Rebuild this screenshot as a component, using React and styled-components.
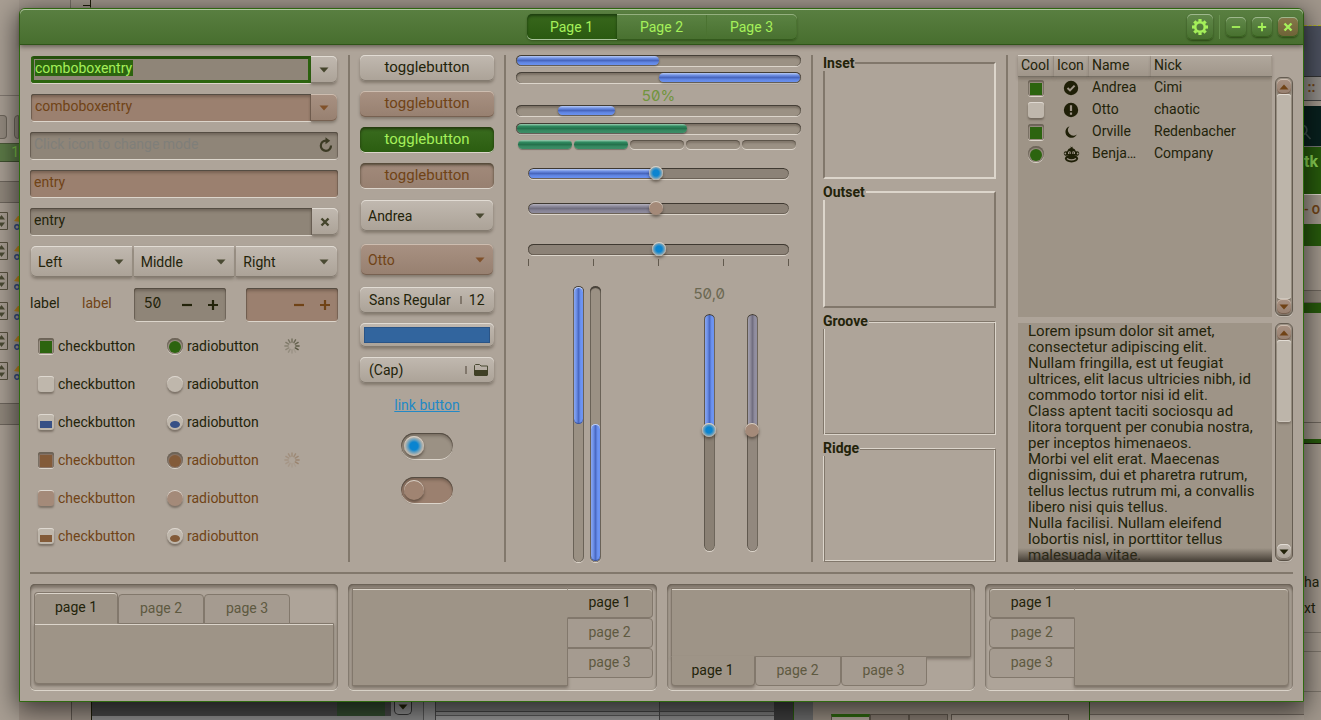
import React from "react";
import styled, { createGlobalStyle, css } from "styled-components";

const c = {
  bg: "#aea499",
  base: "#9e9487",
  field: "#8f8578",
  off: "#9b806f",
  text: "#23230a",
  textOff: "#704316",
  line: "#82786c",
  light: "#dcd5cb",
  green: "#2c640f",
  lime: "#a5f05a",
};

const Global = createGlobalStyle`
  *, *::before, *::after { box-sizing: border-box; }
  body { margin: 0; background: #9f958a; color: ${c.text}; font: 14px/16px Roboto, "Liberation Sans", sans-serif; }
  button, input, select, textarea { font: inherit; color: inherit; margin: 0; padding: 0; border: 0; background: none; border-radius: 0; outline: 0; }
`;

const raised = css`
  background: ${(p) => (p.$off ? "linear-gradient(#a89182, #978070)" : "linear-gradient(#c1b9b0, #aba297)")};
  color: ${(p) => (p.$off ? c.textOff : c.text)};
  box-shadow: inset 0 1px ${(p) => (p.$off ? "#cdbdb0" : "#e2dcd4")}, inset 0 -1px ${(p) => (p.$off ? "#776151" : "#837a6f")}, 0 2px 3px rgba(50, 40, 30, 0.35);
`;
const sunken = css`
  background: ${(p) => (p.$off ? c.off : c.field)};
  color: ${(p) => (p.$off ? c.textOff : c.text)};
  box-shadow: inset 0 -1px ${c.light}, inset 0 1px #554d43, inset 1px 0 rgba(70, 60, 50, 0.4), inset -1px 0 rgba(70, 60, 50, 0.3), inset 0 3px 3px rgba(40, 30, 20, 0.3);
`;

/* ---------- desktop ---------- */
const Desktop = styled.div`
  display: grid;
  grid-template-columns: 19px minmax(0, 1fr) 17px;
  grid-template-rows: 8px auto minmax(18px, 1fr);
  min-height: 100vh;
  overflow: hidden;
`;
const TopStrip = styled.div`
  grid-area: 1 / 2 / 2 / 3;
  display: flex;
  background: #a1978c;
  span:first-child { width: 52px; border-right: 1px solid #777067; }
  span:last-child { width: 20px; border-right: 1px solid #1c1c08; border-bottom: 1px solid #a1978c; background: linear-gradient(#1c1c08, #1c1c08) no-repeat 12px 5px / 8px 1px; }
`;
const LeftStrip = styled.div`
  grid-area: 1 / 1 / 4 / 2;
  overflow: hidden;
  background: #a89e93;
`;
const LeftBand = styled.div`
  height: ${(p) => p.$h}px;
  background: ${(p) => p.$bg || "transparent"};
  border-bottom: 1px solid ${(p) => p.$line || "transparent"};
  color: #7cc247;
  text-align: right;
  padding-top: ${(p) => p.$pad || 0}px;
`;
const OldSpin = styled.div`
  display: flex;
  gap: 7px;
  padding-top: 19px;
  span { height: 24px; border: 1px solid #6d655b; border-left: 0; border-radius: 0 4px 4px 0; width: 10px; background: #938a7f; }
  span + span { border-left: 1px solid #6d655b; border-radius: 4px 0 0 4px; width: 6px; }
`;
const SpinLine = styled.div`
  display: flex;
  align-items: flex-start;
  gap: 6px;
  height: 30px;
  svg { flex: none; }
`;
const RightStrip = styled.div`
  grid-area: 1 / 3 / 4 / 4;
  overflow: hidden;
  background: #a1978c;
`;
const RightBand = styled.div`
  height: ${(p) => p.$h}px;
  background: ${(p) => p.$bg || "transparent"};
  border-bottom: 1px ${(p) => p.$style || "solid"} ${(p) => p.$line || "transparent"};
  color: ${(p) => p.$color || c.text};
  font-weight: ${(p) => (p.$bold ? 700 : 400)};
  font-size: ${(p) => p.$size || 14}px;
  line-height: ${(p) => p.$lh || 16}px;
  padding-top: ${(p) => p.$pad || 0}px;
  white-space: nowrap;
`;
const BottomStrip = styled.div`
  grid-area: 3 / 2 / 4 / 3;
  display: flex;
  background: #999086;
  overflow: hidden;
`;
const BottomPart = styled.div`
  flex: ${(p) => p.$w} 1 0;
  background: ${(p) => p.$bg};
  border-right: 1px solid ${(p) => p.$line || "transparent"};
  display: flex;
  justify-content: flex-end;
  align-items: flex-start;
`;
const GreenBlock = styled.span`width: 48px; height: 14px; background: #314a2e; margin-right: 5px;`;
const TinyDown = styled.span`
  width: 18px; height: 13px; margin-right: 11px; border: 1px solid #333; border-top: 0; border-radius: 0 0 5px 5px; background: #8c8c8c;
  display: flex; flex: none; justify-content: center; padding-top: 2px;
`;
const BackTabs = styled.div`
  display: flex;
  width: 100%;
  margin-top: 12px;
  padding-left: 18px;
  span { width: 39px; height: 6px; border: 1px solid #5c5349; border-bottom: 0; background: #81766c; }
  span:first-child { border-top: 3px solid ${c.green}; background: #aaa095; }
  span:nth-child(4) { width: 118px; margin-left: 3px; background: #9b9085; }
`;

/* ---------- window ---------- */
const Window = styled.div`
  grid-area: 2 / 2 / 3 / 3;
  position: relative;
  border: 1px solid #2f6a10;
  border-radius: 6px 6px 0 0;
  background: ${c.bg};
  box-shadow: 0 6px 26px 2px rgba(0, 0, 0, 0.62);
`;
const TitleBar = styled.header`
  display: grid;
  grid-template-columns: 1fr auto 1fr;
  align-items: center;
  height: 36px;
  padding: 0 5px 1px;
  border-radius: 5px 5px 0 0;
  background: linear-gradient(#597f41, #476e2e);
  box-shadow: inset 0 1px #b2c9a2, inset 0 -1px #2e5418, 0 2px 4px rgba(40, 35, 25, 0.5);
`;
const Switcher = styled.nav`
  grid-column: 2;
  display: flex;
  height: 26px;
  border-radius: 5px;
  box-shadow: 0 1px 2px rgba(20, 40, 0, 0.4);
`;
const PageButton = styled.button`
  width: 90px;
  color: ${c.lime};
  background: ${(p) => (p.$on ? "linear-gradient(#38671c, #2a5a10)" : "linear-gradient(#5b8343, #48702f)")};
  box-shadow: ${(p) => (p.$on ? "inset 0 -1px #aac59b, inset 0 2px 3px rgba(0,20,0,.5)" : "inset 0 1px #94b07f, inset 0 -1px #345a1d, inset -1px 0 #4b7331")};
  &:first-child { border-radius: 5px 0 0 5px; }
  &:last-child { border-radius: 0 5px 5px 0; }
`;
const Controls = styled.div`
  display: flex;
  align-items: center;
  justify-content: flex-end;
  gap: 6px;
`;
const TitleButton = styled.button`
  display: grid;
  place-items: center;
  width: ${(p) => (p.$big ? 26 : 20)}px;
  height: ${(p) => (p.$big ? 26 : 20)}px;
  border-radius: 5px;
  color: ${c.lime};
  background: ${(p) => (p.$close ? "linear-gradient(#86784a, #6d6236)" : "linear-gradient(#62894b, #47702e)")};
  box-shadow: inset 0 1px #9fb88e, inset 0 -1px #38601f, 0 1px 2px rgba(20, 40, 0, 0.6);
`;
const TitleRule = styled.span`width: 1px; height: 24px; background: #66904d;`;

const Content = styled.main`padding: 10px;`;
const Columns = styled.div`
  display: grid;
  grid-template-columns: 308fr 2px 134fr 2px 285fr 2px 173fr 2px 275fr;
  gap: 10px;
  height: 507px;
`;
const VRule = styled.div`background: ${c.line};`;
const HRule = styled.hr`height: 2px; border: 0; margin: 10px 0; background: ${c.line};`;

/* ---------- first column ---------- */
const Entries = styled.div`
  display: flex;
  flex-direction: column;
  gap: 10px;
  padding-top: 1px;
  min-width: 0;
`;
const Linked = styled.div`
  display: flex;
  height: 28px;
  padding: 0 ${(p) => (p.$inset ? 1 : 0)}px;
`;
const Entry = styled.input`
  flex: 1;
  min-width: 0;
  height: 28px;
  padding: 0 4px 4px;
  border-radius: ${(p) => (p.$joined ? "3px 0 0 3px" : "3px")};
  ${sunken}
`;
const FocusEntry = styled.div`
  flex: 1;
  min-width: 0;
  padding: 1px 1px 0;
  height: 27px;
  border: 3px solid ${c.green};
  border-top-color: #24500c;
  border-radius: 3px 0 0 3px;
  background: ${c.field};
  box-shadow: 0 1px ${c.light};
  input { width: 98px; height: 16px; display: block; background: ${c.green}; color: ${c.lime}; }
`;
const IconEntry = styled.div`
  display: flex;
  align-items: center;
  height: 28px;
  padding-right: 5px;
  border-radius: 3px;
  ${sunken}
  input { flex: 1; min-width: 0; padding: 0 4px 4px; height: 28px; }
  input::placeholder { color: #7f7f7a; opacity: 1; }
  button { height: 18px; }
`;
const EndButton = styled.button`
  display: grid;
  place-items: center;
  width: 26px;
  height: 27px;
  border-radius: 0 5px 5px 0;
  ${raised}
  svg { color: ${(p) => (p.$off ? "#80512a" : "#45452c")}; }
`;
const SelectRow = styled.div`display: flex; gap: 2px; padding: 0 1px; height: 32px;`;
const SelectBox = styled.div`
  position: relative;
  flex: 1;
  min-width: 0;
  height: 31px;
  svg { position: absolute; right: 8px; top: 13px; pointer-events: none; color: ${(p) => (p.$off ? "#80512a" : "#4a4a33")}; }
`;
const Select = styled.select`
  && {
    width: 100%;
    height: 100%;
    padding: 0 7px;
    appearance: none;
    opacity: 1;
    border-radius: ${(p) => p.$r || "5px"};
    ${raised}
  }
`;
const SpinRow = styled.div`
  display: flex;
  height: 34px;
  label { width: 52px; padding-top: 7px; }
  label + label { color: ${c.textOff}; }
`;
const Spin = styled.div`
  display: flex;
  align-items: center;
  gap: 14px;
  flex: 1;
  min-width: 0;
  padding: 0 7px 0 10px;
  border-radius: 3px;
  ${sunken}
  & + & { margin-left: 20px; }
  input { flex: 1; min-width: 0; width: 10px; padding-bottom: 4px; font-family: Inter, sans-serif; font-feature-settings: "zero"; }
  button { height: 12px; width: 12px; }
  svg { display: block; }
`;
const CheckGrid = styled.div`
  display: grid;
  grid-template-columns: 129px 117px auto;
  grid-auto-rows: 38px;
  align-items: center;
  padding-left: 8px;
  margin-top: -5px;
`;
const CheckLabel = styled.label`
  grid-column: ${(p) => p.$col};
  display: flex;
  align-items: center;
  gap: 4px;
  color: ${(p) => (p.$off ? c.textOff : c.text)};
`;
const Mark = styled.input`
  appearance: none;
  display: grid;
  place-items: center;
  flex: none;
  width: 16px;
  height: 16px;
  && { border-radius: ${(p) => (p.type === "radio" ? "8px" : "3px")}; }
  && { background: ${(p) => (p.$off && !p.$mixed ? "#a48a79" : "#bfb7ac")}; }
  box-shadow: inset 0 1px #ded8d0, 0 2px 2px rgba(50, 40, 30, 0.4);
  ${(p) => p.checked && !p.$mixed && css`
    && { background: ${p.$off ? "#8a7466" : "#9a9083"}; }
    box-shadow: inset 0 2px 1px #6c6357, inset 1px 0 #7d7368, inset -1px 0 #7d7368, 0 1px ${c.light};
  `}
  &::after {
    content: "";
    display: ${(p) => (p.checked || p.$mixed ? "block" : "none")};
    width: ${(p) => (p.$mixed && p.type === "radio" ? 10 : 12)}px;
    height: ${(p) => (p.$mixed ? 7 : 12)}px;
    margin-top: ${(p) => (p.$mixed ? 5 : 1)}px;
    border-radius: ${(p) => (p.type === "radio" ? "50%" : "0")};
    background: ${(p) => (p.$off ? "#835b39" : p.$mixed ? "#375086" : c.green)};
  }
`;

/* ---------- second column ---------- */
const Buttons = styled.div`display: flex; flex-direction: column; gap: 10px; min-width: 0;`;
const Toggle = styled.button`
  height: 26px;
  padding-bottom: 2px;
  font-size: 15px;
  border-radius: 5px;
  ${raised}
  ${(p) => p.$on && css`
    color: ${p.$off ? c.textOff : c.lime};
    background: ${p.$off ? "linear-gradient(#a28a7b, #978070)" : "linear-gradient(#3a6c1f, #2b5d10)"};
    box-shadow: inset 0 -1px ${c.light}, inset 0 2px 3px rgba(20, 20, 0, 0.6);
  `}
`;
const ComboSlot = styled.div`display: flex; height: 34px; padding: 1px;`;
const Picker = styled.button`
  display: flex;
  align-items: center;
  height: 26px;
  padding: 0 6px 1px 9px;
  border-radius: 5px;
  white-space: nowrap;
  ${raised}
  i { width: 2px; height: 8px; background: #81776c; margin: 0 7px 0 auto; }
`;
const ColorButton = styled.button`
  height: 24px;
  padding: 4px;
  border-radius: 5px;
  ${raised}
  span { display: block; height: 16px; background: #32659e; border: 1px solid #2a5486; }
`;
const LinkRow = styled.div`
  height: 26px;
  padding-top: 4px;
  text-align: center;
  a { color: #2389c6; }
`;
const SwitchSlot = styled.div`height: 34px; display: grid; place-items: center;`;
const knob = css`
  background: ${(p) => (p.$off ? "#a48a79" : "radial-gradient(circle, #0a84d0 0 3px, #5c9cc0 5px, #c2bab0 7px)")};
  box-shadow: inset 0 1px #d8d0c6, 0 2px 3px rgba(40, 30, 20, 0.5);
`;
const Switch = styled.input`
  appearance: none;
  width: 52px;
  height: 27px;
  padding: 3px;
  border-radius: 14px;
  ${sunken}
  background: ${(p) => (p.$off ? c.off : "#9b9184")};
  &::before { content: ""; display: block; width: 20px; height: 20px; border-radius: 10px; ${knob} background: ${(p) => (p.$off ? "#a08472" : "radial-gradient(circle, #0a84d0 0 4px, #5c9cc0 6px, #bfb7ac 9px)")}; }
`;

/* ---------- third column ---------- */
const Meters = styled.div`display: flex; flex-direction: column; min-width: 0;`;
const blueH = "linear-gradient(#b9ccf5, #6f90e4 25%, #4866bd 50%, #6288e6 75%, #6a90ee)";
const greenH = "linear-gradient(#9fd0b4, #2f8a60 25%, #25714c 50%, #378a62 75%, #3b8c66)";
const greyH = "linear-gradient(#b5b2bd, #8e8b9c 25%, #716e7e 50%, #878497 75%, #8e8b9c)";
const blueV = "linear-gradient(90deg, #8aa6ee, #6f92ea 25%, #4a69c2 50%, #6c93f2 75%, #6c93f2)";
const greyV = "linear-gradient(90deg, #a3a0ae, #8f8c9c 25%, #716e80 50%, #918ea0 75%, #918ea0)";
const Bar = styled.div`
  display: flex;
  height: 11px;
  margin-bottom: ${(p) => p.$gap || 6}px;
  border-radius: 6px;
  padding: 1px;
  background: #9b9184;
  box-shadow: inset 0 1px #453f37, inset 1px 0 #6e665b, inset -1px 0 #6e665b, inset 0 3px 2px rgba(50, 40, 30, 0.3), 0 1px ${c.light};
`;
const BarFill = styled.span`
  height: 9px;
  border-radius: 5px;
  background: ${(p) => (p.$green ? greenH : blueH)};
  box-shadow: 0 1px 2px rgba(30, 30, 30, 0.6);
`;
const Levels = styled.div`
  display: grid;
  grid-template-columns: repeat(5, 1fr);
  gap: 2px;
  padding: 0 5px 0 2px;
  margin-bottom: 17px;
`;
const Level = styled.span`
  height: 9px;
  border-radius: 5px;
  background: ${(p) => (p.$on ? greenH : "#9b9184")};
  box-shadow: ${(p) => (p.$on ? "0 1px 1px #7c7368" : `inset 0 1px #5c5449, inset 0 3px 2px rgba(50,40,30,.25), 0 1px ${c.light}`)};
`;
const Percent = styled.div`
  height: 17px;
  text-align: center;
  font: 15px/16px Inter, sans-serif;
  font-feature-settings: "zero";
  color: #71943e;
`;
const Slider = styled.input`
  appearance: none;
  display: block;
  height: 15px;
  margin: 0 12px ${(p) => p.$gap || 0}px;
  &::-webkit-slider-runnable-track {
    height: 11px;
    border-radius: 6px;
    background: ${(p) => (p.$fill ? `${p.$off ? greyH : blueH} no-repeat 1px 1px / 49% 9px,` : "")} #8c8277;
    box-shadow: inset 0 1px #3f3931, inset 1px 0 #5f574d, inset -1px 0 #6e665b, inset 0 -1px rgba(60,50,40,.4), 0 1px ${c.light};
  }
  &::-webkit-slider-thumb {
    appearance: none;
    width: 14px;
    height: 14px;
    margin-top: -2px;
    border-radius: 7px;
    ${knob}
  }
`;
const Ticks = styled.div`
  display: flex;
  justify-content: space-between;
  margin: 2px 12px 20px;
  span { width: 1px; height: 7px; background: #61594d; }
`;
const Verticals = styled.div`flex: 1; min-height: 0; display: grid; grid-template-columns: 1fr 1fr;`;
const BarPair = styled.div`display: flex; justify-content: center; gap: 6px;`;
const VBar = styled.div`
  display: flex;
  align-items: ${(p) => (p.$end ? "flex-end" : "flex-start")};
  width: 11px;
  padding: 1px;
  border-radius: 6px;
  background: #9b9184;
  box-shadow: inset 0 2px 1px #453f37, inset 1px 0 #6e665b, inset -1px 0 #6e665b, 0 1px ${c.light};
  span { width: 9px; border-radius: 5px; background: ${blueV}; box-shadow: inset 0 1px #c5d3f2, inset 0 -1px #3d5596; }
`;
const ScalePair = styled.div`display: flex; justify-content: center; gap: 28px; padding: 0 0 11px 2px;`;
const Scale = styled.div`
  display: flex;
  flex-direction: column;
  align-items: center;
  width: 15px;
  min-height: 0;
  color: #6b6852;
  font: 15px/16px Inter, sans-serif;
  font-feature-settings: "zero";
  output { height: 28px; white-space: nowrap; }
`;
const VSlider = styled.input`
  appearance: none;
  writing-mode: vertical-lr;
  flex: 1;
  min-height: 0;
  width: 15px;
  &::-webkit-slider-runnable-track {
    width: 11px;
    border-radius: 6px;
    background: ${(p) => (p.$off ? greyV : blueV)} no-repeat 1px 1px / 9px 49%, ${(p) => (p.$off ? "#92887e" : "#8a8074")};
    box-shadow: inset 0 1px #3f3931, inset 1px 0 #60584e, inset -1px 0 #6e665b, 0 1px ${c.light};
  }
  &::-webkit-slider-thumb {
    appearance: none;
    width: 14px;
    height: 14px;
    margin-left: -2px;
    border-radius: 7px;
    ${knob}
  }
`;

/* ---------- fourth column ---------- */
const Frames = styled.div`display: flex; flex-direction: column; gap: 5px; min-width: 0;`;
const d = "#81776b";
const l = c.light;
const frameLook = {
  inset: css`border: 2px solid; border-color: ${d} ${l} ${l} ${d};`,
  outset: css`border: 2px solid; border-color: ${l} ${d} ${d} ${l};`,
  groove: css`border: 1px solid; border-color: ${d} ${l} ${l} ${d}; box-shadow: inset 1px 1px ${l}, inset -1px -1px ${d};`,
  ridge: css`border: 1px solid; border-color: ${l} ${d} ${d} ${l}; box-shadow: inset 1px 1px ${d}, inset -1px -1px ${l};`,
};
const thin = (p) => p.$look === "groove" || p.$look === "ridge";
const Frame = styled.fieldset`
  flex: 1;
  min-width: 0;
  margin: 0;
  padding: 0;
  ${(p) => frameLook[p.$look]}
  legend { margin-left: ${(p) => (thin(p) ? -1 : -2)}px; padding: 0 1px 0 0; font-weight: 700; line-height: 16px; background: ${c.bg}; }
`;

/* ---------- fifth column ---------- */
const Lists = styled.div`display: grid; grid-template-rows: 262fr 239fr; gap: 6px; min-width: 0;`;
const Scrolled = styled.div`
  display: grid;
  grid-template-columns: minmax(0, 1fr) 18px;
  gap: 3px;
  min-height: 0;
`;
const TablePane = styled.div`background: ${c.base};`;
const Table = styled.table`
  width: 100%;
  table-layout: fixed;
  border-collapse: collapse;
  th, td { height: 22px; padding: 0 3px 2px; text-align: left; font-weight: 400; overflow: hidden; text-overflow: ellipsis; white-space: nowrap; }
  th:nth-child(1) { width: 36px; }
  th:nth-child(2) { width: 35px; }
  th:nth-child(3) { width: 62px; }
  th { background: linear-gradient(#b1a89d, #9f9589); box-shadow: inset 0 1px ${c.light}, inset 0 -1px #777065, inset -1px 0 #a1978b, 0 2px 3px rgba(60, 50, 40, 0.3); overflow: visible; text-overflow: clip; }
  td:nth-child(-n + 2) { padding: 0 0 0 10px; overflow: visible; }
  td svg { display: block; }
  td:nth-child(2) { padding-left: 9px; }
`;
const Scrollbar = styled.div`
  display: flex;
  flex-direction: column;
  padding: 1px;
  margin-top: ${(p) => (p.$below ? 22 : 0)}px;
  margin-bottom: 1px;
  border: 1px solid #665d52;
  border-radius: 6px;
  background: ${c.base};
  box-shadow: 0 1px #cfc8be;
`;
const Stepper = styled.button`
  display: grid;
  place-items: center;
  height: 15px;
  border-radius: 5px;
  ${raised}
`;
const ScrollThumb = styled.div`
  flex: ${(p) => (p.$h ? `0 0 ${p.$h}px` : "1")};
  margin-bottom: ${(p) => (p.$h ? "auto" : "0")};
  border-radius: 3px;
  background: #bdb5aa;
  box-shadow: inset 0 1px #e2dcd4, inset 0 -1px #cfc8be, 0 2px 2px rgba(50, 40, 30, 0.3);
`;
const TextPane = styled.div`
  position: relative;
  min-height: 0;
  overflow: hidden;
  background: ${c.base};
  textarea { display: block; width: 100%; height: 100%; padding: 0 10px; font-size: 15px; line-height: 16px; resize: none; overflow: hidden; white-space: pre; }
  &::after { content: ""; position: absolute; inset: auto 0 0; height: 14px; background: linear-gradient(transparent, rgba(50, 44, 36, 0.85)); pointer-events: none; }
`;

/* ---------- notebooks ---------- */
const Books = styled.div`display: grid; grid-template-columns: repeat(4, 1fr); gap: 10px; height: 107px;`;
const Book = styled.section`
  display: flex;
  flex-direction: ${(p) => ({ top: "column", right: "row-reverse", bottom: "column-reverse", left: "row" })[p.$side]};
  padding: ${(p) => (p.$side === "top" ? "8px 4px 7px" : "4px 4px 5px")};
  border-radius: 5px;
  box-shadow: inset 0 -1px ${c.light}, inset 0 1px #6b6257, inset 0 4px 3px rgba(60, 50, 40, 0.4), inset 1px 0 2px #8a8075, inset -1px 0 2px #8a8075;
`;
const upright = (side) => side === "top" || side === "bottom";
const TabStrip = styled.div`
  display: flex;
  position: relative;
  align-items: ${(p) => (p.$side === "top" ? "flex-end" : "stretch")};
  flex-direction: ${(p) => (upright(p.$side) ? "row" : "column")};
  margin: ${(p) => ({ top: "0 0 -1px", right: "0 0 0 -1px", bottom: "-1px 0 0", left: "0 -1px 0 0" })[p.$side]};
`;
const radii = { top: "4px 4px 0 0", right: "0 4px 4px 0", bottom: "0 0 4px 4px", left: "4px 0 0 4px" };
const opened = { top: "bottom", right: "left", bottom: "top", left: "right" };
const Tab = styled.button`
  width: ${(p) => (upright(p.$side) && p.$on ? 84 : 86)}px;
  height: ${(p) => (p.$side === "top" && p.$on ? 32 : 30)}px;
  padding-bottom: 2px;
  && { border: 1px solid ${c.line}; }
  && { border-radius: ${(p) => radii[p.$side]}; }
  background: ${(p) => (p.$on ? c.base : "#a59b90")};
  color: ${(p) => (p.$on ? c.text : "#5e5940")};
  ${(p) => p.$on && css`
    && { border-${opened[p.$side]}-color: ${c.base}; }
    box-shadow: ${p.$side === "bottom" ? "0 2px 3px rgba(60,50,40,.4)" : `inset 0 1px ${c.light}`};
  `}
`;
const BookPage = styled.div`
  flex: 1;
  min-width: 0;
  min-height: 0;
  border: 1px solid ${c.line};
  border-radius: ${(p) => (p.$side === "top" ? "0 0 4px 4px" : p.$side === "left" ? "0 4px 4px 0" : "0")};
  background: ${c.base};
  box-shadow: inset 0 1px ${c.light}, 0 2px 3px rgba(60, 50, 40, 0.45);
`;

/* ---------- icons ---------- */
const Down = ({ up }) => (
  <svg width="10" height="6" viewBox="0 0 10 6"><path fill="currentColor" d={up ? "M5 0.5 9.5 5.5H0.5z" : "M0.5 0.5H9.5L5 5.5z"} /></svg>
);
const Minus = ({ size = 12 }) => (
  <svg width={size} height={size} viewBox="0 0 12 12"><path d="M1 6H11" stroke="currentColor" strokeWidth="2.2" /></svg>
);
const Plus = ({ size = 12 }) => (
  <svg width={size} height={size} viewBox="0 0 12 12"><path d="M1 6H11M6 1V11" stroke="currentColor" strokeWidth="2.2" /></svg>
);
const Cross = () => (
  <svg width="10" height="10" viewBox="0 0 10 10"><path d="M1.5 1.5 8.5 8.5M8.5 1.5 1.5 8.5" stroke="currentColor" strokeWidth="2.4" /></svg>
);
const Gear = () => (
  <svg width="18" height="18" viewBox="0 0 18 18" fill="none" stroke="currentColor">
    <circle cx="9" cy="9" r="4.8" strokeWidth="2.6" />
    {[0, 45, 90, 135, 180, 225, 270, 315].map((a) => (
      <path key={a} d="M9 3.6V1" strokeWidth="3.2" transform={`rotate(${a} 9 9)`} />
    ))}
  </svg>
);
const Refresh = () => (
  <svg width="14" height="16" viewBox="0 0 14 16" fill="none">
    <path d="M12 8.5A5.1 5.1 0 1 1 7 3.6H8.5" stroke="#3c3a24" strokeWidth="2.2" />
    <path d="M6.5 0.2 11.2 3.8 6.5 7.2z" fill="#3c3a24" />
  </svg>
);
const Folder = () => (
  <svg width="14" height="12" viewBox="0 0 14 12">
    <path d="M0.5 11V1.5L1.5 0.5H5.5L7 2H13.5V11" fill="none" stroke="#4a4a33" />
    <path d="M0 6H14V11L13 12H1L0 11z" fill="#404026" />
  </svg>
);
const Spinner = ({ off }) => (
  <svg width="16" height="16" viewBox="0 0 16 16" stroke={off ? "#8a6a4c" : "#4a4a33"} strokeWidth="1.4" strokeLinecap="round">
    {Array.from({ length: 12 }, (_, i) => (
      <path key={i} d="M8 4.2V0.9" opacity={(off ? 0.45 : 0.75) * (((i + 7) % 12) / 11) + 0.12} transform={`rotate(${i * 30} 8 8)`} />
    ))}
  </svg>
);
const CheckIcon = () => (
  <svg width="16" height="16" viewBox="0 0 16 16"><circle cx="8" cy="8" r="7.2" fill="#1f1f07" /><path d="M4.5 8 7 10.4 11.6 5.6" stroke="#9e9487" strokeWidth="2" fill="none" /></svg>
);
const AlertIcon = () => (
  <svg width="16" height="16" viewBox="0 0 16 16"><circle cx="8" cy="8" r="7.2" fill="#1f1f07" /><path d="M8 3.2V9M8 10.6V12.8" stroke="#9e9487" strokeWidth="2.2" /></svg>
);
const MoonIcon = () => (
  <svg width="16" height="16" viewBox="0 0 16 16"><path d="M6.5 2.2A6 6 0 1 0 13.8 10.6 5.6 5.6 0 0 1 6.5 2.2z" fill="#1f1f07" /></svg>
);
const MonkeyIcon = () => (
  <svg width="17" height="17" viewBox="0 0 17 17" fill="#1f1f07">
    <path d="M8 1.8 7 0.6 9 1.2 10 0.4 9.4 1.9A5 5 0 0 1 13 5.4 2.3 2.3 0 1 1 13 9.6L4 9.6A2.3 2.3 0 1 1 4 5.4 5 5 0 0 1 8 1.8z" />
    <ellipse cx="8.5" cy="12.6" rx="6.6" ry="3.9" />
    <path d="M5 6.2A1.7 1.7 0 0 1 8 6.2V8H5zM9 6.2A1.7 1.7 0 0 1 12 6.2V8H9z" fill="#9e9487" />
    <circle cx="6.8" cy="7" r="0.8" /><circle cx="10.2" cy="7" r="0.8" />
    <path d="M4 12.4Q8.5 15.4 13 12.4" stroke="#9e9487" strokeWidth="1.2" fill="none" />
    <circle cx="2.3" cy="7.5" r="0.9" fill="#9e9487" /><circle cx="14.7" cy="7.5" r="0.9" fill="#9e9487" />
  </svg>
);
const SpinGlyph = () => (
  <svg width="8" height="18" viewBox="0 0 8 18"><path d="M0 0.5H7.5V17.5H0" fill="#a79d92" stroke="#57513f" /><path d="M-2 7.5 1.5 3 5 7.5zM-2 10.5H5L1.5 15z" fill="#4a4a33" /></svg>
);
const PenGlyph = () => (
  <svg width="7" height="18" viewBox="0 0 7 18"><path d="M0 9 4 4H7V10z" fill="#c08a1c" /><circle cx="3" cy="15" r="2.2" fill="none" stroke="#2f4b86" strokeWidth="1.4" /></svg>
);
const SearchGlyph = () => (
  <svg width="9" height="17" viewBox="0 0 9 17" fill="none" stroke="#3d4f4c" strokeWidth="1.6"><path d="M0 1.5A5 5 0 0 1 0 10.5M2 10 6.5 15" /></svg>
);

const lorem = `Lorem ipsum dolor sit amet,
consectetur adipiscing elit.
Nullam fringilla, est ut feugiat
ultrices, elit lacus ultricies nibh, id
commodo tortor nisi id elit.
Class aptent taciti sociosqu ad
litora torquent per conubia nostra,
per inceptos himenaeos.
Morbi vel elit erat. Maecenas
dignissim, dui et pharetra rutrum,
tellus lectus rutrum mi, a convallis
libero nisi quis tellus.
Nulla facilisi. Nullam eleifend
lobortis nisl, in porttitor tellus
malesuada vitae.`;

const marks = [
  { checked: true },
  {},
  { mixed: true },
  { checked: true, off: true },
  { off: true },
  { mixed: true, off: true },
];

const people = [
  ["checkbox", true, <CheckIcon />, "Andrea", "Cimi"],
  ["checkbox", false, <AlertIcon />, "Otto", "chaotic"],
  ["checkbox", true, <MoonIcon />, "Orville", "Redenbacher"],
  ["radio", true, <MonkeyIcon />, "Benjamin", "Company"],
];

const Combo = ({ value, off, r }) => (
  <SelectBox $off={off}>
    <Select $off={off} $r={r} disabled={off} aria-label={value} defaultValue={value}>
      <option>{value}</option>
    </Select>
    <Down />
  </SelectBox>
);

const Notebook = ({ side }) => (
  <Book $side={side}>
    <TabStrip $side={side} role="tablist">
      {[1, 2, 3].map((n) => (
        <Tab key={n} role="tab" aria-selected={n === 1} $side={side} $on={n === 1}>page {n}</Tab>
      ))}
    </TabStrip>
    <BookPage $side={side} role="tabpanel" />
  </Book>
);

export default function App() {
  return (
    <>
      <Global />
      <Desktop>
        <TopStrip><span /><span /></TopStrip>
        <LeftStrip>
          <LeftBand $h={96} $line="#817870" />
          <OldSpin><span /><span /></OldSpin>
          <LeftBand $h={5} $line="#4b5a38" />
          <LeftBand $h={18} $bg="#5c7a47" $line="#3e4f2e">1</LeftBand>
          <LeftBand $h={20} $line="#6d655c" />
          <LeftBand $h={21} $bg="#8f867b" $line="#6d655c" />
          <LeftBand $h={9} />
          {[0, 1, 2, 3, 4, 5].map((n) => (
            <SpinLine key={n}><SpinGlyph /><PenGlyph /></SpinLine>
          ))}
          <LeftBand $h={12} $line="#6d655c" />
          <LeftBand $h={21} $bg="#8f867b" $line="#6d655c" />
        </LeftStrip>
        <RightStrip>
          <RightBand $h={26} $line="#b3b320" $style="dashed" />
          <RightBand $h={51} $bg="#4d5260" $line="#333" />
          <RightBand $h={24} $bg="#918d89" $line="#444" $color="#704316" $bold $pad={2}>&nbsp;::</RightBand>
          <RightBand $h={5} />
          <RightBand $h={41} $bg="#08201e" $line="#777" $pad={18}><SearchGlyph /></RightBand>
          <RightBand $h={48} $bg="#275a0c" $color="#8ad455" $line={c.light} $bold $pad={7} $size={16}>tk</RightBand>
          <RightBand $h={29} $color={c.textOff} $bold $pad={7} $size={12}>- O</RightBand>
          <RightBand $h={22} $bg="#275a0c" />
          <RightBand $h={45} $line="#6d655c" />
          <RightBand $h={12} $bg="#8f867b" $line="#6d655c" />
          <RightBand $h={10} $bg="#275a0c" />
          <RightBand $h={110} $line="#6d655c" />
          <RightBand $h={16} />
          <RightBand $h={5} $bg="#275a0c" $line="#1c1c08" />
          <RightBand $h={189} $line="#7d756b" $pad={125} $lh={26}>ha<br />xt</RightBand>
          <RightBand $h={19} $line="#7d756b" />
          <RightBand $h={40} $line="#7d756b" />
        </RightStrip>
        <BottomStrip>
          <BottomPart $w={52} $bg="#9b8f84" $line="#5f574f" />
          <BottomPart $w={20} $bg="#948a80" $line="#1c1c08" />
          <BottomPart $w={300} $bg="linear-gradient(#474747 14px, #8a8a8a 14px)"><GreenBlock /></BottomPart>
          <BottomPart $w={32} $bg="#858585" $line="#555"><TinyDown><Down /></TinyDown></BottomPart>
          <BottomPart $w={12} $bg="#8a8a8a" $line="#444" />
          <BottomPart $w={224} $bg="linear-gradient(#707070 9px, #444 9px 10px, #858585 10px 13px, #555 13px 14px, #949494 14px)" $line="#444" />
          <BottomPart $w={114} $bg="linear-gradient(#606060 9px, #444 9px 10px, #7a7a7a 10px 13px, #555 13px 14px, #888 14px)" />
          <BottomPart $w={20} $bg="#3c3c3c" $line="#275a0c" />
          <BottomPart $w={18} $bg="#6a6a6a" />
          <BottomPart $w={278} $bg="#91877c" $line="#275a0c"><BackTabs><span /><span /><span /><span /></BackTabs></BottomPart>
          <BottomPart $w={215} $bg="linear-gradient(#91877c 12px, #6b6259 12px 13px, #a59b90 13px)" />
        </BottomStrip>

        <Window>
          <TitleBar>
            <Switcher>
              <PageButton $on>Page 1</PageButton>
              <PageButton>Page 2</PageButton>
              <PageButton>Page 3</PageButton>
            </Switcher>
            <Controls>
              <TitleButton $big aria-label="Settings"><Gear /></TitleButton>
              <TitleRule />
              <TitleButton aria-label="Minimize"><Minus size={10} /></TitleButton>
              <TitleButton aria-label="Maximize"><Plus size={10} /></TitleButton>
              <TitleButton $close aria-label="Close"><Cross /></TitleButton>
            </Controls>
          </TitleBar>

          <Content>
            <Columns>
              <Entries>
                <Linked $inset>
                  <FocusEntry><input defaultValue="comboboxentry" aria-label="Combo entry" /></FocusEntry>
                  <EndButton aria-label="Open list"><Down /></EndButton>
                </Linked>
                <Linked $inset>
                  <Entry $off $joined disabled defaultValue="comboboxentry" aria-label="Disabled combo entry" />
                  <EndButton $off disabled aria-label="Open list"><Down /></EndButton>
                </Linked>
                <IconEntry>
                  <input placeholder="Click icon to change mode" aria-label="Mode" />
                  <button aria-label="Change mode"><Refresh /></button>
                </IconEntry>
                <Linked><Entry $off disabled defaultValue="entry" aria-label="Disabled entry" /></Linked>
                <Linked>
                  <Entry $joined defaultValue="entry" aria-label="Entry" />
                  <EndButton aria-label="Clear"><Cross /></EndButton>
                </Linked>
                <SelectRow>
                  <Combo value="Left" r="5px 0 0 5px" />
                  <Combo value="Middle" r="0" />
                  <Combo value="Right" r="0 5px 5px 0" />
                </SelectRow>
                <SpinRow>
                  <label htmlFor="spin-a">label</label>
                  <label htmlFor="spin-b">label</label>
                  <Spin>
                    <input id="spin-a" defaultValue="50" />
                    <button aria-label="Decrease"><Minus /></button>
                    <button aria-label="Increase"><Plus /></button>
                  </Spin>
                  <Spin $off>
                    <input id="spin-b" disabled />
                    <button disabled aria-label="Decrease"><Minus /></button>
                    <button disabled aria-label="Increase"><Plus /></button>
                  </Spin>
                </SpinRow>
                <CheckGrid>
                  {marks.map((m, i) => (
                    <React.Fragment key={i}>
                      <CheckLabel $col={1} $off={m.off}>
                        <Mark type="checkbox" checked={!!m.checked} readOnly disabled={m.off} $off={m.off} $mixed={m.mixed} />checkbutton
                      </CheckLabel>
                      <CheckLabel $col={2} $off={m.off}>
                        <Mark type="radio" checked={!!m.checked} readOnly disabled={m.off} $off={m.off} $mixed={m.mixed} />radiobutton
                      </CheckLabel>
                      {m.checked && <Spinner off={m.off} />}
                    </React.Fragment>
                  ))}
                </CheckGrid>
              </Entries>
              <VRule />

              <Buttons>
                <Toggle>togglebutton</Toggle>
                <Toggle $off disabled>togglebutton</Toggle>
                <Toggle $on>togglebutton</Toggle>
                <Toggle $on $off disabled>togglebutton</Toggle>
                <ComboSlot><Combo value="Andrea" /></ComboSlot>
                <ComboSlot><Combo value="Otto" off /></ComboSlot>
                <Picker>Sans Regular<i />12&nbsp;</Picker>
                <ColorButton aria-label="Pick a color"><span /></ColorButton>
                <Picker>(Cap)<i /><Folder /></Picker>
                <LinkRow><a href="#link">link button</a></LinkRow>
                <SwitchSlot><Switch type="checkbox" role="switch" aria-label="Switch" /></SwitchSlot>
                <SwitchSlot><Switch type="checkbox" role="switch" disabled $off aria-label="Disabled switch" /></SwitchSlot>
              </Buttons>
              <VRule />

              <Meters>
                <Bar role="progressbar" aria-valuenow={50}><BarFill style={{ width: "50%" }} /></Bar>
                <Bar $gap={5} role="progressbar" aria-valuenow={50}><BarFill style={{ width: "50%", marginLeft: "50%" }} /></Bar>
                <Percent>50%</Percent>
                <Bar $gap={7} role="progressbar"><BarFill style={{ width: "20%", marginLeft: "14.5%" }} /></Bar>
                <Bar $gap={6} role="meter" aria-valuenow={60}><BarFill $green style={{ width: "60%" }} /></Bar>
                <Levels>{[1, 1, 0, 0, 0].map((on, i) => <Level key={i} $on={on} />)}</Levels>
                <Slider type="range" $fill $gap={20} defaultValue={49} aria-label="Scale" />
                <Slider type="range" $fill $off $gap={26} disabled defaultValue={49} aria-label="Disabled scale" />
                <Slider type="range" defaultValue={50} aria-label="Scale with marks" />
                <Ticks><span /><span /><span /><span /><span /></Ticks>
                <Verticals>
                  <BarPair>
                    <VBar role="progressbar" aria-valuenow={50}><span style={{ height: "50%" }} /></VBar>
                    <VBar $end role="progressbar" aria-valuenow={50}><span style={{ height: "50%" }} /></VBar>
                  </BarPair>
                  <ScalePair>
                    <Scale><output>50,0</output><VSlider type="range" defaultValue={49} aria-label="Vertical scale" /></Scale>
                    <Scale><output /><VSlider type="range" $off disabled defaultValue={49} aria-label="Disabled vertical scale" /></Scale>
                  </ScalePair>
                </Verticals>
              </Meters>
              <VRule />

              <Frames>
                <Frame $look="inset"><legend>Inset</legend></Frame>
                <Frame $look="outset"><legend>Outset</legend></Frame>
                <Frame $look="groove"><legend>Groove</legend></Frame>
                <Frame $look="ridge"><legend>Ridge</legend></Frame>
              </Frames>
              <VRule />

              <Lists>
                <Scrolled>
                  <TablePane>
                    <Table>
                      <thead><tr><th>Cool</th><th>Icon</th><th>Name</th><th>Nick</th></tr></thead>
                      <tbody>
                        {people.map(([type, on, icon, name, nick]) => (
                          <tr key={name}>
                            <td><Mark type={type} checked={on} readOnly aria-label={`${name} is cool`} /></td>
                            <td>{icon}</td><td>{name}</td><td>{nick}</td>
                          </tr>
                        ))}
                      </tbody>
                    </Table>
                  </TablePane>
                  <Scrollbar $below>
                    <Stepper $off aria-label="Scroll up"><Down up /></Stepper>
                    <ScrollThumb />
                    <Stepper $off aria-label="Scroll down"><Down /></Stepper>
                  </Scrollbar>
                </Scrolled>
                <Scrolled>
                  <TextPane><textarea readOnly aria-label="Text" value={lorem} /></TextPane>
                  <Scrollbar>
                    <Stepper $off aria-label="Scroll up"><Down up /></Stepper>
                    <ScrollThumb $h={82} />
                    <Stepper aria-label="Scroll down"><Down /></Stepper>
                  </Scrollbar>
                </Scrolled>
              </Lists>
            </Columns>
            <HRule />
            <Books>
              <Notebook side="top" />
              <Notebook side="right" />
              <Notebook side="bottom" />
              <Notebook side="left" />
            </Books>
          </Content>
        </Window>
      </Desktop>
    </>
  );
}
